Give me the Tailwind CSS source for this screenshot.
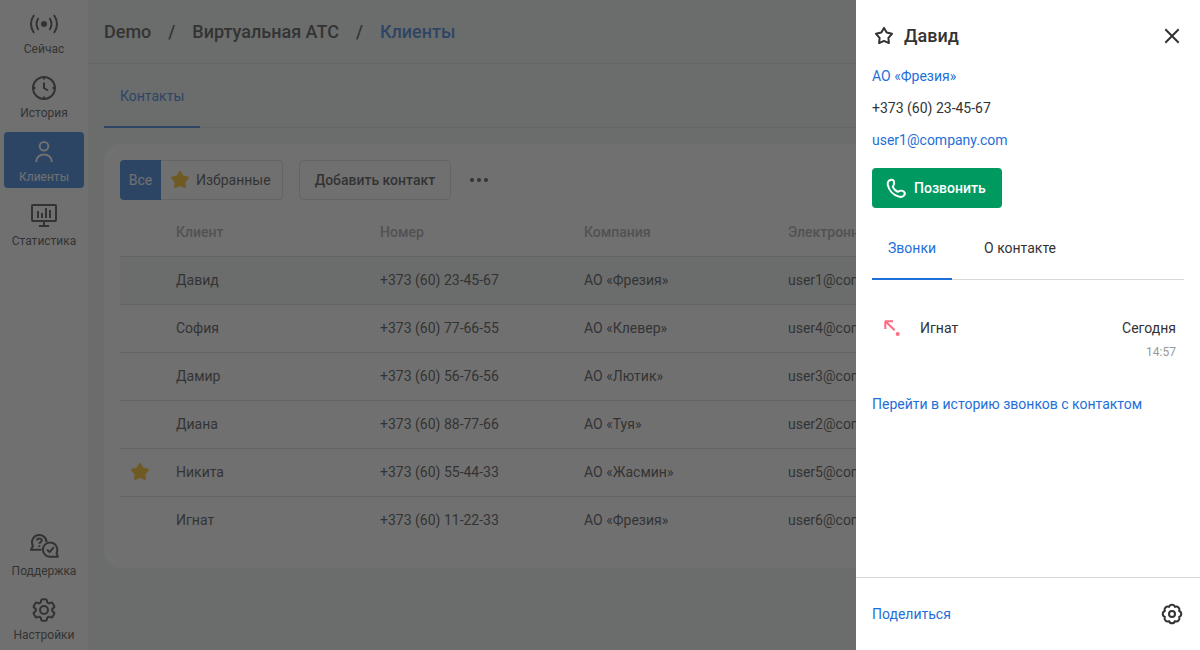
<!DOCTYPE html>
<html lang="ru">
<head>
  <meta charset="UTF-8" />
  <meta name="viewport" content="width=device-width, initial-scale=1" />
  <title>Клиенты</title>
  <script src="https://cdn.jsdelivr.net/npm/@tailwindcss/browser@4"></script>
</head>
<body class="font-[Roboto,sans-serif] text-sm text-[#333333] bg-[#edf4f1] overflow-hidden">
  <!-- Shared star shape -->
  <svg class="hidden">
    <symbol id="star" viewBox="0 0 24 24">
      <path d="M12 3.9l2.7 4.7 5.3 1.2-3.600 4 .5 5.300-4.900-2.200-4.900 2.200.5-5.300-3.600-4 5.300-1.200z" stroke="currentColor" stroke-width="2" stroke-linejoin="round" />
    </symbol>
  </svg>

  <div class="flex h-screen">
    <!-- Sidebar -->
    <nav class="w-[88px] shrink-0 bg-white p-1 flex flex-col justify-between text-xs">
      <div class="flex flex-col gap-2">
        <a href="#" class="w-20 h-14 pt-2 rounded flex flex-col items-center gap-[5px]">
          <svg class="w-8 h-6" viewBox="0 0 32 24" fill="none" stroke="currentColor" stroke-width="2">
            <circle cx="16" cy="12" r="3" fill="currentColor" stroke="none" />
            <path d="M6 3Q0 12 6 21M26 3Q32 12 26 21M10.5 6Q6.5 12 10.5 18M21.5 6Q25.5 12 21.5 18" />
          </svg>
          <span>Сейчас</span>
        </a>
        <a href="#" class="w-20 h-14 pt-2 rounded flex flex-col items-center gap-[5px]">
          <svg class="w-8 h-6" viewBox="0 0 32 24" fill="none" stroke="currentColor" stroke-width="2">
            <circle cx="16" cy="12" r="11" />
            <path d="M16 6.5V12l4 2.5M16 1v2.5M16 20.5V23M5 12h2.5M24.500 12H27" />
          </svg>
          <span>История</span>
        </a>
        <a href="#" class="w-20 h-14 pt-2 rounded flex flex-col items-center gap-[5px] bg-[#1e6fd9] text-white">
          <svg class="w-8 h-6" viewBox="0 0 32 24" fill="none" stroke="currentColor" stroke-width="2">
            <circle cx="16" cy="6.300" r="4.300" />
            <path d="M8.200 22v-.5a7.800 7 0 0 1 15.600 0v.5" />
          </svg>
          <span>Клиенты</span>
        </a>
        <a href="#" class="w-20 h-14 pt-2 rounded flex flex-col items-center gap-[5px]">
          <svg class="w-8 h-6" viewBox="0 0 32 24" fill="none" stroke="currentColor" stroke-width="2">
            <rect x="4" y="1" width="24" height="16" rx="1" />
            <path d="M10 7v7M14 9v5M18 4v10M22 6v8M16 17v5M11 22h10" />
          </svg>
          <span>Статистика</span>
        </a>
      </div>
      <div class="flex flex-col gap-2">
        <a href="#" class="w-20 h-14 pt-2 rounded flex flex-col items-center gap-[5px]">
          <svg class="w-8 h-6" viewBox="0 0 32 24" fill="none" stroke="currentColor" stroke-width="2" stroke-linejoin="round">
            <path d="M13.500 15.300c-.8.4-1.700.5-2.400.5H2.800L5 12A7.300 7.300 0 1 1 18.600 8.100" />
            <path d="M28.600 19.200l1.400 3.600h-7.600a7.200 7.200 0 1 1 6.900-7.200c0 1.400-.2 2.500-.7 3.600z" />
            <path d="M8.900 6.400c.2-2.600 5-2.400 4.900.1-.1 1.600-2.500 1.500-2.500 3.200M11.300 11.200v1.800M19 15.500l2.600 2.600 4.200-5" />
          </svg>
          <span>Поддержка</span>
        </a>
        <a href="#" class="w-20 h-14 pt-2 rounded flex flex-col items-center gap-[5px]">
          <svg class="size-6" viewBox="2 2 20 20" fill="none" stroke="currentColor" stroke-width="1.7">
            <path d="M9.594 3.940c.09-.542.56-.94 1.110-.94h2.593c.55 0 1.020.398 1.110.94l.213 1.281c.063.374.313.686.645.87.074.04.147.083.22.127.325.196.72.257 1.075.124l1.217-.456a1.125 1.125 0 0 1 1.370.49l1.296 2.247a1.125 1.125 0 0 1-.26 1.431l-1.003.827c-.293.241-.438.613-.43.992a7.723 7.723 0 0 1 0 .255c-.008.378.137.75.43.991l1.004.827c.424.35.534.955.26 1.430l-1.298 2.247a1.125 1.125 0 0 1-1.369.491l-1.217-.456c-.355-.133-.75-.072-1.076.124a6.470 6.470 0 0 1-.22.128c-.331.183-.581.495-.644.869l-.213 1.281c-.09.543-.56.94-1.110.94h-2.594c-.55 0-1.019-.398-1.110-.94l-.213-1.281c-.062-.374-.312-.686-.644-.87a6.520 6.520 0 0 1-.22-.127c-.325-.196-.72-.257-1.076-.124l-1.217.456a1.125 1.125 0 0 1-1.369-.49l-1.297-2.247a1.125 1.125 0 0 1 .26-1.431l1.004-.827c.292-.24.437-.613.43-.991a6.932 6.932 0 0 1 0-.255c.007-.38-.138-.751-.43-.992l-1.004-.827a1.125 1.125 0 0 1-.26-1.430l1.297-2.247a1.125 1.125 0 0 1 1.370-.491l1.216.456c.356.133.751.072 1.076-.124.072-.044.146-.086.22-.128.332-.183.582-.495.644-.869l.214-1.280Z" />
            <circle cx="12" cy="12" r="3.300" />
          </svg>
          <span>Настройки</span>
        </a>
      </div>
    </nav>

    <!-- Main content -->
    <main class="flex-1 min-w-0">
      <header class="h-16 px-4 border-b border-[#d8dcda] flex items-center gap-[17px] text-lg font-medium">
        <a href="#">Demo</a>
        <span>/</span>
        <a href="#">Виртуальная АТС</a>
        <span>/</span>
        <a href="#" class="text-[#1e6fd9]">Клиенты</a>
      </header>

      <div class="px-4">
        <div class="h-16 flex border-b border-[#d8dcda]">
          <button class="h-16 px-4 pt-0.5 border-b-2 border-[#1e6fd9] text-[#1e6fd9]">Контакты</button>
        </div>

        <section class="mt-4 bg-white rounded-2xl p-4 pb-6">
          <div class="flex items-center gap-4">
            <div class="flex h-10">
              <button class="w-[41px] rounded-l bg-[#1e6fd9] text-white">Все</button>
              <button class="pl-[7px] pr-[11px] flex items-center gap-1 rounded-r border border-l-0 border-[#d8d8d8]">
                <svg class="size-6 text-[#ffb400]" fill="currentColor"><use href="#star" /></svg>
                Избранные
              </button>
            </div>
            <button class="h-10 px-[15px] rounded border border-[#d8d8d8] font-medium">Добавить контакт</button>
            <button aria-label="Ещё" class="size-6 flex items-center justify-center">
              <svg class="size-6" viewBox="0 0 24 24" fill="currentColor">
                <circle cx="5" cy="12" r="2" /><circle cx="12" cy="12" r="2" /><circle cx="19" cy="12" r="2" />
              </svg>
            </button>
          </div>

          <table class="mt-2 w-full table-fixed text-left whitespace-nowrap">
            <thead>
              <tr class="h-12 text-[#999999] border-b border-[#d8d8d8]">
                <th class="w-10"></th>
                <th class="w-[204px] px-4 font-medium">Клиент</th>
                <th class="w-[204px] px-4 font-medium">Номер</th>
                <th class="w-[204px] px-4 font-medium">Компания</th>
                <th class="px-4 font-medium">Электронная почта</th>
              </tr>
            </thead>
            <tbody id="clients"></tbody>
          </table>
        </section>
      </div>
    </main>
  </div>

  <!-- Overlay and contact panel -->
  <div class="fixed inset-0 bg-[#333333]/70"></div>
  <aside class="fixed inset-y-0 right-0 w-[344px] bg-white flex flex-col">
    <div class="flex-1 px-4 pt-6">
      <div class="flex items-center gap-2">
        <button aria-label="В избранное"><svg class="size-6 block" fill="none"><use href="#star" /></svg></button>
        <h2 class="flex-1 text-lg leading-6 font-medium">Давид</h2>
        <button aria-label="Закрыть">
          <svg class="size-6 block" viewBox="0 0 24 24" stroke="currentColor" stroke-width="2">
            <path d="M5.300 5.300l13.400 13.400M18.700 5.300L5.300 18.700" />
          </svg>
        </button>
      </div>
      <div class="mt-3 flex flex-col items-start leading-8">
        <a href="#" class="text-[#1e6fd9]">АО «Фрезия»</a>
        <span>+373 (60) 23-45-67</span>
        <a href="#" class="text-[#1e6fd9]">user1@company.com</a>
      </div>
      <button class="mt-3 h-10 pl-3 pr-4 flex items-center gap-1.5 rounded bg-[#009a61] text-white font-medium">
        <svg class="size-6" viewBox="0 0 24 24" fill="none" stroke="currentColor" stroke-width="2" stroke-linejoin="round">
          <path d="M6.500 4c1.500-.3 3 .1 3.400 1.200.5 1.700.3 3.400-.6 4.400-.6.6-.6 1.100-.2 1.800 1 1.800 2.500 3.200 4.200 4.100.7.3 1.100.2 1.600-.3 1.400-1 4-.5 5.200.7 1 1 .8 2.600-.3 3.700-1.200 1.300-3.100 1.500-5 1C9.500 19.100 5 14.500 3.800 9 3.300 6.800 4.200 4.500 6.500 4z" />
        </svg>
        Позвонить
      </button>

      <div class="mt-2 h-16 flex gap-4 border-b border-[#d8d8d8]">
        <button class="h-16 px-4 pt-0.5 border-b-2 border-[#1e6fd9] text-[#1e6fd9]">Звонки</button>
        <button class="h-16 px-4 pt-0.5 border-b-2 border-transparent">О контакте</button>
      </div>

      <div class="mt-9 px-2 flex items-start gap-4">
        <svg class="size-6" viewBox="0 0 24 24" fill="none" stroke="#ff6b81" stroke-width="2">
          <path d="M13 5.300H4.800M5.300 5.300V13M5.300 5.300l9.400 9" />
          <circle cx="17.700" cy="18" r="2" fill="#ff6b81" stroke="none" />
        </svg>
        <span class="flex-1 leading-6">Игнат</span>
        <div class="text-right">
          <p class="leading-6">Сегодня</p>
          <p class="text-xs leading-6 text-[#999999]">14:57</p>
        </div>
      </div>

      <a href="#" class="mt-7 block leading-6 text-[#1e6fd9]">Перейти в историю звонков с контактом</a>
    </div>

    <footer class="px-4 py-6 flex items-center justify-between border-t border-[#d8d8d8]">
      <a href="#" class="text-[#1e6fd9]">Поделиться</a>
      <button aria-label="Настройки">
        <svg class="size-6 block" viewBox="0 0 24 24" fill="none" stroke="currentColor" stroke-width="2" stroke-linejoin="round">
          <path d="M9.050 4.890a3.100 3.100 0 0 1 5.900 0a3.100 3.100 0 0 1 4.160 4.160a3.100 3.100 0 0 1 0 5.900a3.100 3.100 0 0 1-4.160 4.160a3.100 3.100 0 0 1-5.900 0a3.100 3.100 0 0 1-4.160-4.160a3.100 3.100 0 0 1 0-5.900a3.100 3.100 0 0 1 4.160-4.160z" />
          <circle cx="12" cy="12" r="3" />
        </svg>
      </button>
    </footer>
  </aside>

  <script>
    const clients = [
      { name: 'Давид', phone: '+373 (60) 23-45-67', company: 'АО «Фрезия»', email: 'user1@company.com', active: true },
      { name: 'София', phone: '+373 (60) 77-66-55', company: 'АО «Клевер»', email: 'user4@company.com' },
      { name: 'Дамир', phone: '+373 (60) 56-76-56', company: 'АО «Лютик»', email: 'user3@company.com' },
      { name: 'Диана', phone: '+373 (60) 88-77-66', company: 'АО «Туя»', email: 'user2@company.com' },
      { name: 'Никита', phone: '+373 (60) 55-44-33', company: 'АО «Жасмин»', email: 'user5@company.com', starred: true },
      { name: 'Игнат', phone: '+373 (60) 11-22-33', company: 'АО «Фрезия»', email: 'user6@company.com' },
    ];

    const star = '<svg class="size-6 ml-2 text-[#ffb400]" fill="currentColor"><use href="#star" /></svg>';

    document.getElementById('clients').innerHTML = clients.map((c) => `
      <tr class="h-12 border-b border-[#d8d8d8] last:border-b-0 ${c.active ? 'bg-[#edf4f1]' : ''}">
        <td>${c.starred ? star : ''}</td>
        <td class="px-4">${c.name}</td>
        <td class="px-4">${c.phone}</td>
        <td class="px-4">${c.company}</td>
        <td class="px-4">${c.email}</td>
      </tr>`).join('');
  </script>
</body>
</html>
